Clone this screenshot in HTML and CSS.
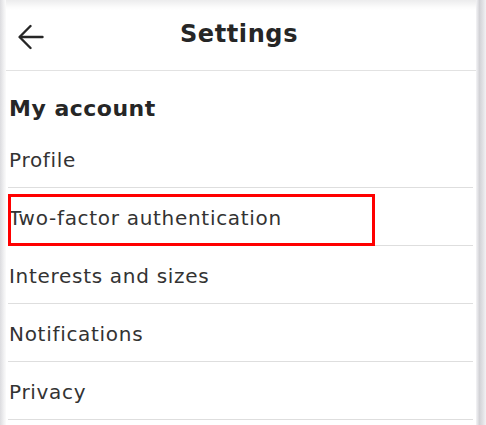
FILE: index.html
```html
<!DOCTYPE html>
<html lang="en">
<head>
<meta charset="utf-8">
<title>Settings</title>
<link rel="stylesheet" href="styles.css">
</head>
<body>
<div class="screen">
  <div class="edge edge-left"></div>
  <div class="page">
    <header class="topbar">
      <button class="back" aria-label="Back">
        <svg width="26" height="26" viewBox="0 0 26 26" fill="none" stroke="#262626" stroke-width="2.4" stroke-linecap="round" stroke-linejoin="round">
          <path d="M24.5 13H2"/>
          <path d="M12.5 2L1.6 13 12.5 24"/>
        </svg>
      </button>
      <h1 class="title">Settings</h1>
    </header>
    <main class="content">
      <h2 class="section-title">My account</h2>
      <ul class="list">
        <li class="row">Profile</li>
        <li class="row row-highlight">Two-factor authentication</li>
        <li class="row">Interests and sizes</li>
        <li class="row">Notifications</li>
        <li class="row">Privacy</li>
      </ul>
    </main>
  </div>
  <div class="edge edge-right"></div>
</div>
</body>
</html>
```

FILE: styles.css
```css
html, body {
  margin: 0;
  padding: 0;
  background: #ffffff;
}

body {
  font-family: "DejaVu Sans", "Liberation Sans", sans-serif;
  color: #2b2b2b;
}

.screen {
  display: flex;
  height: 425px;
  overflow: hidden;
}

.edge {
  flex: none;
}

.edge-left {
  width: 6px;
  background: linear-gradient(to right, #dcdcdf, #f3f3f4 70%, #fbfbfb);
}

.edge-right {
  width: 10px;
  background: linear-gradient(to right, #f4f4f6, #d2d2d6 35%, #e2e2e5 70%, #f2f2f4);
}

.page {
  flex: 1;
  display: flex;
  flex-direction: column;
  min-width: 0;
}

.topbar {
  display: flex;
  align-items: center;
  position: relative;
  border-bottom: 1px solid #e2e2e2;
  background: linear-gradient(to bottom, #ececed 0, #fbfbfb 7px, #ffffff 10px);
  box-sizing: border-box;
  height: 71px;
}

.back {
  border: 0;
  background: none;
  padding: 0;
  margin-left: 12px;
  margin-top: 3px;
  width: 26px;
  height: 26px;
  display: flex;
}

.title {
  position: absolute;
  left: 0;
  right: 0;
  margin: 0;
  text-align: center;
  font-family: "DejaVu Sans", "Liberation Sans", sans-serif;
  font-weight: 700;
  font-size: 24px;
  letter-spacing: 0.6px;
  line-height: 30px;
  top: 19px;
  color: #262626;
  padding-right: 4px;
}

.content {
  flex: 1;
  padding: 0 3px 0 2px;
}

.section-title {
  margin: 24px 0 7px 1px;
  font-size: 22px;
  letter-spacing: 0.5px;
  line-height: 28px;
  font-weight: 700;
  color: #262626;
}

.list {
  list-style: none;
  margin: 0;
  padding: 0;
}

.row {
  height: 54px;
  padding-top: 3px;
  line-height: 54px;
  border-bottom: 1px solid #dedede;
  font-size: 20px;
  letter-spacing: 0.7px;
  padding-left: 1px;
  color: #333333;
  position: relative;
}

.row-highlight::after {
  content: "";
  position: absolute;
  left: 0;
  top: 6px;
  width: 367px;
  height: 52px;
  box-sizing: border-box;
  border: 3px solid #ff0000;
}
```
